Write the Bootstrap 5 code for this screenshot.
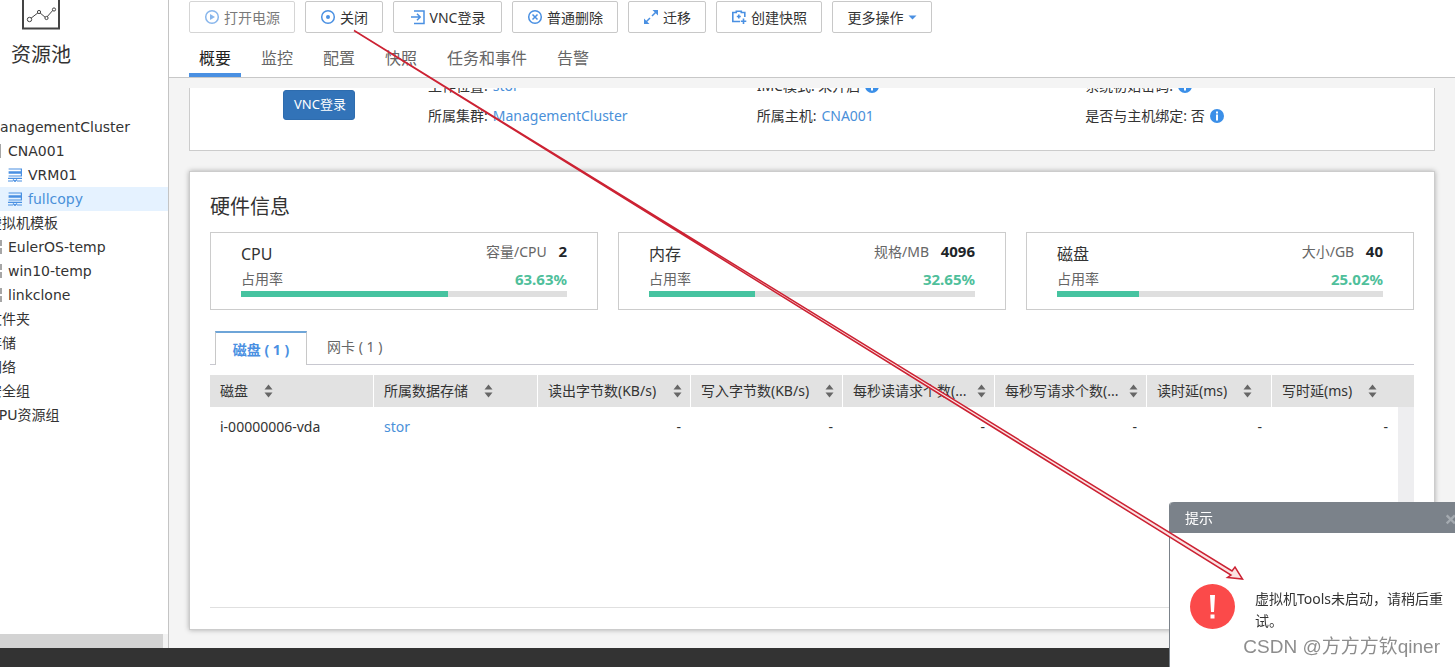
<!DOCTYPE html>
<html lang="zh-CN">
<head>
<meta charset="utf-8">
<meta name="viewport" content="width=device-width, initial-scale=1">
<title>资源池 - fullcopy</title>
<link href="https://cdn.jsdelivr.net/npm/bootstrap@5.3.0/dist/css/bootstrap.min.css" rel="stylesheet">
<style>
  body { font-family: "Noto Sans", "Noto Sans CJK SC", sans-serif; font-size: 14px; line-height: 20px; color: #333; background: #fff; }
  a { color: #4a90d9; text-decoration: none; }
  svg { flex: none; display: block; }
  .side { width: 169px; border-right: 1px solid #c4c4c4; }
  .side-head { height: 115px; padding: 0 11px; font-size: 20px; line-height: 30px; }
  .side-head svg { margin: 0 0 10px 10px; }
  .tree { margin-left: -32px; font-family: "DejaVu Sans", "Noto Sans CJK SC", sans-serif; }
  .tree .node { height: 24px; display: flex; align-items: center; gap: 6px; padding-left: 20px; white-space: nowrap; color: #333; font-size: 14px; }
  .tree .lv2 { padding-left: 20px; }
  .tree .lv3 { padding-left: 40px; }
  .tree .active { background: #e5f2ff; color: #4a90d9; }
  .tree svg { color: #a6a6a6; }
  .tree .vm { color: #4a90e2; }
  .hbar { height: 14px; background: #f3f3f3; padding-right: 5px; }
  .hbar div { background: #d3d3d3; }
  .tools { padding: 1px 20px 0; gap: 10px; }
  .tools .btn { --bs-btn-font-size: 14px; --bs-btn-padding-x: 14px; --bs-btn-padding-y: 0; --bs-btn-border-radius: 2px; --bs-btn-border-color: #c8c8c8; --bs-btn-color: #333; --bs-btn-disabled-color: #333; --bs-btn-disabled-border-color: #c0c0c0; height: 32px; display: inline-flex; align-items: center; justify-content: center; gap: 4px; white-space: nowrap; }
  .tools .console { min-width: 109px; }
  .tools .more { min-width: 100px; }
  .tools svg { color: #4a90e2; }
  .views { padding: 0 20px; gap: 10px; height: 45px; border-bottom: 1px solid #c8c8c8; }
  .views .nav-link { color: #666; height: 44px; padding: 13px 10px 0; line-height: 24px; border-bottom: 4px solid transparent; font-size: 16px; }
  .views .nav-link.active { color: #222; border-color: #4a90e2; }
  .stage { background: #f4f4f4; padding: 10px 20px 19px; }
  .summary { height: 63px; background: #fff; border: 1px solid #ccc; border-top: 0; padding: 0 20px 19px 0; margin-bottom: 20px; }
  .summary .shot { width: 238px; padding: 0 0 11px 93px; }
  .summary .btn { --bs-btn-bg: #3273b8; --bs-btn-border-color: #2e6cae; --bs-btn-border-radius: 3px; --bs-btn-font-size: 13px; --bs-btn-padding-x: 10px; --bs-btn-padding-y: 0; height: 30px; width: 72px; white-space: nowrap; }
  .summary .prop { height: 30px; display: flex; align-items: center; gap: 5px; white-space: nowrap; }
  .panel { background: #fff; border: 1px solid #ccc; box-shadow: 0 0 5px rgba(0,0,0,.3); padding: 20px 20px 21px; }
  .panel h2 { font-size: 20px; line-height: 30px; margin: 0 0 10px; font-weight: 400; }
  .meters { gap: 20px; }
  .meter { border: 1px solid #ccc; padding: 8px 30px 12px; height: 78px; color: #666; }
  .meter h3 { font-size: 16px; line-height: 26px; margin: 0; color: #333; font-weight: 400; }
  .meter b { font-size: 15px; }
  .meter .used { line-height: 24px; }
  .meter .progress { --bs-progress-height: 6px; --bs-progress-bg: #dfdfdf; --bs-progress-border-radius: 0; --bs-progress-bar-bg: #46c3a0; }
  .green { color: #4fbf9b; }
  .subtabs { height: 34px; padding-left: 5px; margin: 21px 0 10px; border-bottom: 1px solid #c8c8d0; }
  .subtabs .nav-link { color: #666; height: 34px; padding: 6px 20px 0; border: 0; border-radius: 0; }
  .subtabs .nav-link.active { color: #4a90e2; font-weight: bold; min-width: 92px; text-align: center; padding: 7px 15px 0; border: 1px solid #c8c8c8; border-top: 2px solid #6ea5d8; border-bottom: 0; }
  .grid { table-layout: fixed; width: 100%; border-collapse: separate; border-spacing: 0; }
  .grid th { background: #e2e2e2; height: 32px; padding: 0 10px; font-weight: normal; border-right: 1px solid #fff; }
  .grid th.pad { border: 0; padding: 0; }
  .grid th.wide { border: 0; }
  .grid td { height: 40px; padding: 0 10px; }
  .grid .num { text-align: right; }
  .grid .filler td { height: 160px; }
  .grid .gutter { background: #eeeef0; padding: 0; }
  .grid-box { border-bottom: 1px solid #e0e0e0; }
  .sort { display: flex; align-items: center; white-space: nowrap; gap: 16px; }
  .sort.tight { gap: 0; justify-content: space-between; margin-right: -2px; }
  .foot { height: 19px; background: #333; }
  .notice { position: fixed; right: -16px; bottom: -24px; width: 302px; height: 189px; background: #fff; border-left: 1px solid #7b828a; border-radius: 4px 4px 0 0; }
  .notice-head { height: 31px; background: #7b828a; color: #fff; border-radius: 4px 4px 0 0; padding: 0 14px 0 15px; }
  .notice-head .btn { color: #a4aab0; font-size: 22px; font-weight: bold; line-height: 20px; padding: 0; border: 0; }
  .notice-body { padding: 51px 24px 0 20px; gap: 20px; line-height: 22px; }
  .notice-body p { margin: 4px 0 0; }
  .sign { position: fixed; right: 15px; bottom: 7px; font: 19px/26px "Liberation Sans", "Noto Sans CJK SC", sans-serif; color: #8d8d8d; }
  .pointer { position: fixed; inset: 0; width: 100vw; height: 100vh; pointer-events: none; }
</style>
</head>
<body class="vh-100 d-flex flex-column overflow-hidden">
<svg class="d-none">
  <symbol id="i-vm" viewBox="0 0 14 14"><g fill="none" stroke="currentColor" stroke-width="1.200"><path d="M.6 1h12.8v2.800H.6M.6 5.200h12.800V8H.6M13.400 3.800v1.400M0 10.400h14M0 13h5M9 13h5"/><path d="m5 11.500 2 2 2-2"/></g></symbol>
  <symbol id="i-host" viewBox="0 0 14 14"><path fill="currentColor" d="M1 0h12v14H1z"/></symbol>
  <symbol id="i-tpl" viewBox="0 0 14 14"><path fill="currentColor" d="M0 0h6v6H0zM8 0h6v6H8zM0 8h6v6H0zM8 8h6v6H8z"/></symbol>
  <symbol id="i-info" viewBox="0 0 14 14"><circle cx="7" cy="7" r="7" fill="#3b8fe8"/><path fill="#fff" d="M6 2.500h2v2H6zM6 5.500h2v6H6z"/></symbol>
  <symbol id="i-sort" viewBox="0 0 9 14"><path fill="#666" d="M4.500 .5 8.500 5.500H.5zM.5 8.500h8L4.500 13.500z"/></symbol>
</svg>

<div class="d-flex flex-grow-1 overflow-hidden">
  <aside class="side d-flex flex-column flex-shrink-0 overflow-hidden">
    <div class="side-head">
      <svg width="40" height="30" viewBox="0 0 40 30" fill="none" stroke="#444"><path stroke-width="2" d="M2 -1v29.500h36V-1z"/><path d="m9 19 9-7 7 6 8-9"/><g fill="#fff"><circle cx="8.500" cy="19.500" r="2.200"/><circle cx="18" cy="12" r="1.600"/><circle cx="25.500" cy="18" r="1.600"/><circle cx="33" cy="9.500" r="1.600"/></g></svg>
      资源池
    </div>
    <nav class="tree flex-grow-1">
      <a class="node" href="#">ManagementCluster</a>
      <a class="node lv2" href="#"><svg width="14" height="14"><use href="#i-host"/></svg>CNA001</a>
      <a class="node lv3" href="#"><svg class="vm" width="14" height="14"><use href="#i-vm"/></svg>VRM01</a>
      <a class="node lv3 active" href="#"><svg class="vm" width="14" height="14"><use href="#i-vm"/></svg>fullcopy</a>
      <a class="node" href="#">虚拟机模板</a>
      <a class="node lv2" href="#"><svg width="14" height="14"><use href="#i-tpl"/></svg>EulerOS-temp</a>
      <a class="node lv2" href="#"><svg width="14" height="14"><use href="#i-tpl"/></svg>win10-temp</a>
      <a class="node lv2" href="#"><svg width="14" height="14"><use href="#i-tpl"/></svg>linkclone</a>
      <a class="node" href="#">文件夹</a>
      <a class="node" href="#">存储</a>
      <a class="node" href="#">网络</a>
      <a class="node" href="#">安全组</a>
      <a class="node" href="#">GPU资源组</a>
    </nav>
    <div class="hbar"><div class="h-100"></div></div>
  </aside>

  <main class="flex-grow-1 d-flex flex-column overflow-hidden">
    <div class="tools d-flex">
      <button class="btn" type="button" disabled><svg width="16" height="16" viewBox="0 0 16 16"><circle cx="8" cy="8" r="6.300" fill="none" stroke="currentColor" stroke-width="1.500"/><path fill="currentColor" d="m6 5 5 3-5 3z"/></svg>打开电源</button>
      <button class="btn" type="button"><svg width="16" height="16" viewBox="0 0 16 16"><circle cx="8" cy="8" r="6.300" fill="none" stroke="currentColor" stroke-width="1.500"/><circle cx="8" cy="8" r="2" fill="currentColor"/></svg>关闭</button>
      <button class="btn console" type="button"><svg width="16" height="16" viewBox="0 0 16 16" fill="none" stroke="currentColor" stroke-width="1.500"><path d="M4 2h10v12.500H4M1 8h9M7 4.800 10.200 8 7 11.200"/></svg>VNC登录</button>
      <button class="btn" type="button"><svg width="16" height="16" viewBox="0 0 16 16" fill="none" stroke="currentColor" stroke-width="1.500"><circle cx="8" cy="8" r="6.300"/><path d="m5.500 5.500 5 5m0-5-5 5"/></svg>普通删除</button>
      <button class="btn" type="button"><svg width="16" height="16" viewBox="0 0 16 16"><path fill="currentColor" d="M9.500 1H15v5.500zM1 9.500V15h5.500z"/><path stroke="currentColor" stroke-width="1.500" d="m13 3-4 4M3 13l4-4"/></svg>迁移</button>
      <button class="btn" type="button"><svg width="16" height="16" viewBox="0 0 16 16" fill="none" stroke="currentColor" stroke-width="1.600"><path d="M9 12.500H1.800v-9h3.500V2.200h5v1.300h3.500V8M12.500 9.500v5.500M9.800 12.300h5.500"/><path d="M7.800 5.500v4M5.800 7.500h4"/></svg>创建快照</button>
      <button class="btn more" type="button">更多操作<svg width="9" height="5" viewBox="0 0 9 5"><path fill="currentColor" d="M.5.500h8L4.500 4.500z"/></svg></button>
    </div>
    <nav class="views nav flex-nowrap">
      <a class="nav-link active" href="#">概要</a>
      <a class="nav-link" href="#">监控</a>
      <a class="nav-link" href="#">配置</a>
      <a class="nav-link" href="#">快照</a>
      <a class="nav-link" href="#">任务和事件</a>
      <a class="nav-link" href="#">告警</a>
    </nav>

    <div class="stage flex-grow-1 d-flex flex-column overflow-hidden">
      <section class="summary d-flex align-items-end overflow-hidden flex-shrink-0">
        <div class="shot flex-shrink-0"><button class="btn btn-primary" type="button">VNC登录</button></div>
        <div class="row g-0 flex-grow-1">
          <div class="col-4 prop">工作位置: <a href="#">stor</a></div>
          <div class="col-4 prop">IMC模式: 未开启 <svg width="14" height="14"><use href="#i-info"/></svg></div>
          <div class="col-4 prop">系统初始密码: <svg width="14" height="14"><use href="#i-info"/></svg></div>
          <div class="col-4 prop">所属集群: <a href="#">ManagementCluster</a></div>
          <div class="col-4 prop">所属主机: <a href="#">CNA001</a></div>
          <div class="col-4 prop">是否与主机绑定: 否 <svg width="14" height="14"><use href="#i-info"/></svg></div>
        </div>
      </section>

      <section class="panel flex-grow-1">
        <h2>硬件信息</h2>
        <div class="meters d-flex">
          <div class="meter flex-fill w-100">
            <div class="d-flex justify-content-between"><h3>CPU</h3><span>容量/CPU <b class="ms-2 text-dark">2</b></span></div>
            <div class="used d-flex justify-content-between"><span>占用率</span><b class="green">63.63%</b></div>
            <div class="progress"><div class="progress-bar" style="width:63.63%"></div></div>
          </div>
          <div class="meter flex-fill w-100">
            <div class="d-flex justify-content-between"><h3>内存</h3><span>规格/MB <b class="ms-2 text-dark">4096</b></span></div>
            <div class="used d-flex justify-content-between"><span>占用率</span><b class="green">32.65%</b></div>
            <div class="progress"><div class="progress-bar" style="width:32.65%"></div></div>
          </div>
          <div class="meter flex-fill w-100">
            <div class="d-flex justify-content-between"><h3>磁盘</h3><span>大小/GB <b class="ms-2 text-dark">40</b></span></div>
            <div class="used d-flex justify-content-between"><span>占用率</span><b class="green">25.02%</b></div>
            <div class="progress"><div class="progress-bar" style="width:25.02%"></div></div>
          </div>
        </div>

        <nav class="subtabs nav nav-tabs">
          <a class="nav-link active" href="#">磁盘 ( 1 )</a>
          <a class="nav-link" href="#">网卡 ( 1 )</a>
        </nav>

        <div class="grid-box">
          <table class="grid">
            <colgroup><col style="width:164px"><col style="width:164px"><col style="width:153px"><col style="width:152px"><col style="width:152px"><col style="width:152px"><col style="width:125px"><col><col style="width:16px"></colgroup>
            <thead>
              <tr>
                <th><div class="sort">磁盘 <svg width="9" height="14"><use href="#i-sort"/></svg></div></th>
                <th><div class="sort">所属数据存储 <svg width="9" height="14"><use href="#i-sort"/></svg></div></th>
                <th><div class="sort tight">读出字节数(KB/s) <svg width="9" height="14"><use href="#i-sort"/></svg></div></th>
                <th><div class="sort tight">写入字节数(KB/s) <svg width="9" height="14"><use href="#i-sort"/></svg></div></th>
                <th><div class="sort tight">每秒读请求个数(... <svg width="9" height="14"><use href="#i-sort"/></svg></div></th>
                <th><div class="sort tight">每秒写请求个数(... <svg width="9" height="14"><use href="#i-sort"/></svg></div></th>
                <th><div class="sort">读时延(ms) <svg width="9" height="14"><use href="#i-sort"/></svg></div></th>
                <th class="wide"><div class="sort">写时延(ms) <svg width="9" height="14"><use href="#i-sort"/></svg></div></th>
                <th class="pad"></th>
              </tr>
            </thead>
            <tbody>
              <tr>
                <td>i-00000006-vda</td><td><a href="#">stor</a></td>
                <td class="num">-</td><td class="num">-</td><td class="num">-</td><td class="num">-</td><td class="num">-</td><td class="num">-</td>
                <td class="gutter" rowspan="2"></td>
              </tr>
              <tr class="filler"><td colspan="8"></td></tr>
            </tbody>
          </table>
        </div>
      </section>
    </div>
  </main>
</div>
<footer class="foot flex-shrink-0"></footer>

<div class="notice" role="alert">
  <div class="notice-head d-flex align-items-center justify-content-between"><span>提示</span><button class="btn" type="button" aria-label="关闭">×</button></div>
  <div class="notice-body d-flex">
    <svg width="45" height="45" viewBox="0 0 45 45"><circle cx="22.500" cy="22.500" r="22.500" fill="#fb4a4a"/><path fill="#fff" d="M20 11h5l-1 17h-3zM20.500 30.500h4v4h-4z"/></svg>
    <p>虚拟机Tools未启动，请稍后重试。</p>
  </div>
</div>
<div class="sign">CSDN @方方方钦qiner</div>
<svg class="pointer" viewBox="0 0 1455 667"><path d="M354 30.500 1232 571 1235 567 1242.500 579 1227.500 577.500 1231 575z" fill="#fbe3e3" stroke="#cc2233" stroke-width="1.500"/></svg>
<script src="https://cdn.jsdelivr.net/npm/bootstrap@5.3.0/dist/js/bootstrap.bundle.min.js"></script>
</body>
</html>
